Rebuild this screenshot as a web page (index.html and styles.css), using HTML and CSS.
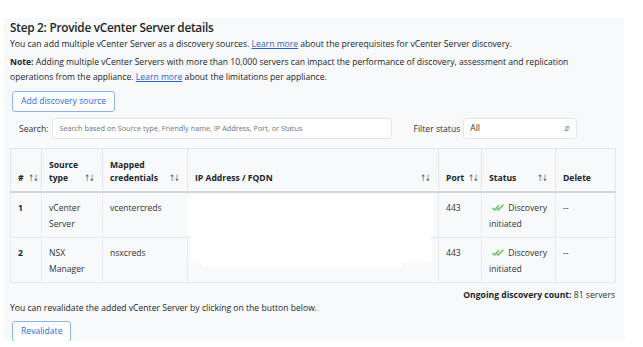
FILE: index.html
```html
<!DOCTYPE html>
<html>
<head>
<meta charset="utf-8">
<link rel="stylesheet" href="styles.css">
</head>
<body>
<div class="panel">
  <h2 class="title">Step 2: Provide vCenter Server details</h2>
  <p class="txt">You can add multiple vCenter Server as a discovery sources. <a href="#">Learn more</a> about the prerequisites for vCenter Server discovery.</p>
  <p class="txt note"><b>Note:</b> Adding multiple vCenter Servers with more than 10,000 servers can impact the performance of discovery, assessment and replication operations from the appliance. <a href="#">Learn more</a> about the limitations per appliance.</p>
  <button class="btn add">Add discovery source</button>
  <div class="searchrow">
    <label class="lbl">Search:</label>
    <div class="input">Search based on Source type, Friendly name, IP Address, Port, or Status</div>
    <label class="lbl flt">Filter status</label>
    <div class="select"><span>All</span><span class="updown">&#8693;</span></div>
  </div>
  <div class="tablewrap">
    <table class="grid">
      <colgroup>
        <col class="c1"><col class="c2"><col class="c3"><col class="c4"><col class="c5"><col class="c6"><col class="c7">
      </colgroup>
      <thead>
        <tr>
          <th><span class="hd tight"><span>#</span><span class="sort">&#8593;&#8595;</span></span></th>
          <th><span class="hd"><span>Source<br>type</span><span class="sort">&#8593;&#8595;</span></span></th>
          <th><span class="hd"><span>Mapped<br>credentials</span><span class="sort">&#8593;&#8595;</span></span></th>
          <th><span class="hd"><span>IP Address / FQDN</span><span class="sort">&#8593;&#8595;</span></span></th>
          <th><span class="hd tight"><span>Port</span><span class="sort">&#8593;&#8595;</span></span></th>
          <th><span class="hd"><span>Status</span><span class="sort">&#8593;&#8595;</span></span></th>
          <th><span class="hd"><span>Delete</span></span></th>
        </tr>
      </thead>
      <tbody>
        <tr>
          <td class="num">1</td>
          <td>vCenter<br>Server</td>
          <td>vcentercreds</td>
          <td></td>
          <td>443</td>
          <td class="status"><svg class="chk" width="13" height="7" viewBox="0 0 13 7"><path d="M0.5 4 L2.5 6 L7 1.2" fill="none" stroke="#5cc05c" stroke-width="1.3"/><path d="M4.5 4.5 L6 6 L11.5 0.8" fill="none" stroke="#5cc05c" stroke-width="1.3"/></svg> Discovery initiated</td>
          <td>--</td>
        </tr>
        <tr>
          <td class="num">2</td>
          <td>NSX<br>Manager</td>
          <td>nsxcreds</td>
          <td></td>
          <td>443</td>
          <td class="status"><svg class="chk" width="13" height="7" viewBox="0 0 13 7"><path d="M0.5 4 L2.5 6 L7 1.2" fill="none" stroke="#5cc05c" stroke-width="1.3"/><path d="M4.5 4.5 L6 6 L11.5 0.8" fill="none" stroke="#5cc05c" stroke-width="1.3"/></svg> Discovery initiated</td>
          <td>--</td>
        </tr>
      </tbody>
    </table>
    <div class="redact r1"></div>
    <div class="redact r2"></div>
    <div class="redact r3"></div>
  </div>
  <p class="count"><b>Ongoing discovery count:</b> 81 servers</p>
  <p class="txt reval">You can revalidate the added vCenter Server by clicking on the button below.</p>
  <button class="btn revalidate">Revalidate</button>
</div>
</body>
</html>
```
FILE: styles.css
```css
html, body {
  margin: 0;
  padding: 0;
  background: #ffffff;
  font-family: "Open Sans", "Noto Sans", sans-serif;
  color: #212529;
  overflow: hidden;
}
.panel {
  margin: 18px 0 0 4px;
  width: 609px;
  height: 323px;
  padding: 0 6px 0 6px;
  background: #f8f9fa;
  overflow: hidden;
}
.title {
  margin: 0;
  padding-top: 1px;
  font-size: 11.8px;
  letter-spacing: -0.25px;
  line-height: 17px;
  font-weight: 600;
  color: #212529;
}
.txt {
  margin: 0;
  max-width: 572px;
  font-size: 8.6px;
  line-height: 15px;
  color: #212529;
}
.title + .txt { margin-top: 1px; }
.note { margin-top: 3px; }
.txt a { color: #2a63c9; text-decoration: underline; }
.txt b { font-weight: 700; }
.btn {
  display: block;
  font-family: inherit;
  font-size: 8.6px;
  color: #2a6be0;
  background: #ffffff;
  border: 1px solid #8fb4ee;
  border-radius: 3px;
  padding: 0 8px;
  height: 21px;
  line-height: 19px;
}
.add { margin-top: 6px; margin-left: 2px; }
.searchrow {
  display: flex;
  align-items: center;
  margin-top: 6px;
  margin-left: 9px;
  height: 21px;
}
.lbl { font-size: 8.6px; color: #333; margin-right: 4px; }
.input {
  width: 326px;
  height: 19px;
  border: 1px solid #e3e6ea;
  background: #fff;
  border-radius: 3px;
  font-size: 7.3px;
  color: #6c757d;
  line-height: 19px;
  padding-left: 6px;
  padding-right: 6px;
  white-space: nowrap;
  overflow: hidden;
}
.flt { margin-left: 21px; margin-right: 3px; }
.select {
  width: 100px;
  height: 19px;
  border: 1px solid #e3e6ea;
  background: #fff;
  border-radius: 3px;
  font-size: 8.6px;
  line-height: 19px;
  padding: 0 6px;
  display: flex;
  justify-content: space-between;
  color: #333;
}
.updown { font-size: 7px; color: #666; }
.tablewrap {
  position: relative;
  margin-top: 9px;
  width: 605px;
}
.grid {
  width: 605px;
  table-layout: fixed;
  border-collapse: collapse;
  font-size: 8.6px;
  border: 1px solid #e3e6ea;
}
.c1 { width: 31px; }
.c2 { width: 61px; }
.c3 { width: 85px; }
.c4 { width: 251px; }
.c5 { width: 43px; }
.c6 { width: 74px; }
.c7 { width: 60px; }
.grid th {
  text-align: left;
  vertical-align: bottom;
  font-weight: 700;
  line-height: 13px;
  padding: 10px 7px 6px 7px;
  border-left: 1px solid #e3e6ea;
  border-bottom: 2px solid #d4d7da;
  box-shadow: 0 1px 0 #e9ecef;
}
.hd { display: flex; justify-content: space-between; align-items: flex-end; }
.hd.tight { justify-content: flex-start; gap: 3px; }
.sort { font-size: 9px; line-height: 13px; font-weight: 400; color: #555; letter-spacing: -1.5px; font-family: "DejaVu Sans", sans-serif; transform: scaleX(0.8); }
.grid td {
  vertical-align: top;
  line-height: 16px;
  padding: 7px 7px 5px 7px;
  border-left: 1px solid #e9ecef;
  border-bottom: 1px solid #e9ecef;
  color: #333;
}
.grid td.num { font-weight: 700; color: #212529; }
.chk { margin-left: 3px; margin-right: 1px; vertical-align: 0; }
.redact { position: absolute; background: #ffffff; }
.r1 { left: 177px; top: 47px; width: 247px; height: 40px; }
.r2 { left: 181px; top: 85px; width: 240px; height: 30px; }
.r3 { left: 192px; top: 100px; width: 200px; height: 19px; }
.count {
  margin: 6px 0 0 0;
  text-align: right;
  width: 605px;
  font-size: 8.6px;
  line-height: 12px;
  color: #333;
}
.count b { color: #212529; }
.reval { margin-top: 0; }
.revalidate { margin-top: 5px; margin-left: 2px; }
```
